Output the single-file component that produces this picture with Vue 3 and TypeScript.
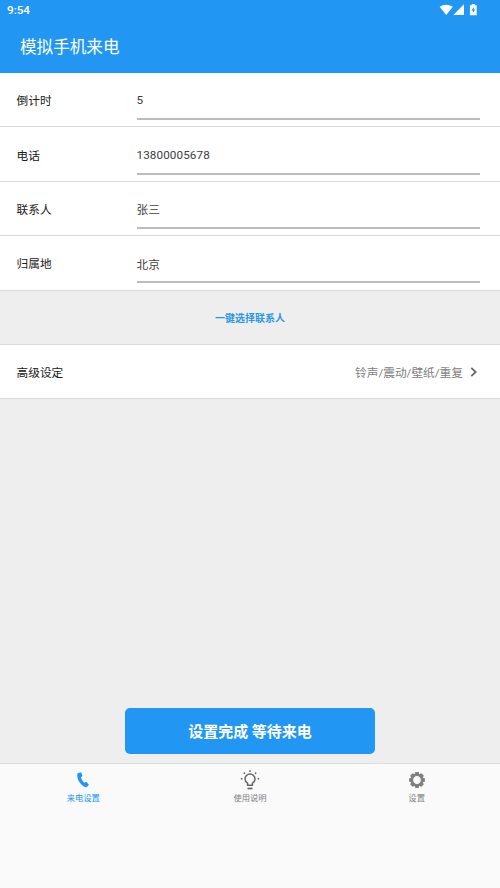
<script setup lang="ts">
import { reactive, ref } from 'vue'

interface Field {
  label: string
  value: string
}

const fields = reactive<Field[]>([
  { label: '倒计时', value: '5' },
  { label: '电话', value: '13800005678' },
  { label: '联系人', value: '张三' },
  { label: '归属地', value: '北京' },
])

const tabs = [
  { id: 'call', label: '来电设置' },
  { id: 'help', label: '使用说明' },
  { id: 'settings', label: '设置' },
]
const active = ref('call')
</script>

<template>
  <div class="screen">
    <header class="header">
      <div class="status">
        <span class="clock">9:54</span>
        <svg class="status-icons" width="39" height="12" viewBox="0 0 39 12">
          <path d="M-.4 2.8Q6.2-1.4 12.8 2.8L6.2 11Z" />
          <path d="M24 .2V11H13.4Z" />
          <path fill-rule="evenodd" d="M31.8 0h3v1.2h1.9V11.2h-6.8V1.2H31.8ZM33.8 3l-2.4 3.5h1.5V9l2.3-3.5H33.8Z" />
        </svg>
      </div>
      <h1 class="title">模拟手机来电</h1>
    </header>

    <main class="content">
      <section>
        <label v-for="field in fields" :key="field.label" class="row field">
          <span class="label">{{ field.label }}</span>
          <input v-model="field.value" class="value" type="text" />
        </label>
      </section>
      <button class="pick" type="button">一键选择联系人</button>
      <div class="row advanced">
        <span class="label">高级设定</span>
        <span class="summary">铃声/震动/壁纸/重复</span>
        <svg class="chevron" width="8" height="10" viewBox="0 0 8 10">
          <path d="M1.3 .8 5.7 5 1.3 9.2" />
        </svg>
      </div>
      <button class="submit" type="button">设置完成 等待来电</button>
    </main>

    <nav class="tabs">
      <button
        v-for="tab in tabs"
        :key="tab.id"
        class="tab"
        :class="{ active: tab.id === active }"
        type="button"
        @click="active = tab.id"
      >
        <svg v-if="tab.id === 'call'" width="20" height="20" viewBox="0 0 20 20">
          <path
            fill="currentColor"
            d="M5.2 3.1 7.3 2.4Q8.1 2.2 8.4 3L9.3 5.6Q9.5 6.2 9 6.6L7.8 7.6Q8.8 10.6 11.2 12.7L12.7 12Q13.3 11.8 13.7 12.2L15.5 14.2Q16 14.8 15.4 15.4L13.9 16.9Q13.2 17.5 12.1 17C7.7 15 4.4 10.3 4.2 5.2Q4.1 3.6 5.2 3.1Z"
          />
        </svg>
        <svg v-else-if="tab.id === 'help'" class="bulb" width="20" height="20" viewBox="0 0 20 20">
          <g fill="none" stroke="currentColor" stroke-width="1.5">
            <path d="M7.6 15.2v-2Q5 11.7 5 9a5 5 0 0 1 10 0q0 2.7-2.6 4.2v2Z" />
            <path d="M7.5 18.5h5" stroke-width="1.7" />
            <path d="M10 .2v1.7M3.8 2.6l1.2 1.2M16.2 2.6l-1.2 1.2M.8 8.7h1.6M17.6 8.7h1.6" />
          </g>
        </svg>
        <svg v-else width="20" height="20" viewBox="0 0 20 20">
          <g fill="currentColor">
            <rect
              v-for="n in 8"
              :key="n"
              x="7.9"
              y="2.1"
              width="4.2"
              height="4"
              rx=".8"
              :transform="`rotate(${n * 45} 10 10)`"
            />
          </g>
          <circle cx="10" cy="10" r="5.2" fill="none" stroke="currentColor" stroke-width="2.6" />
        </svg>
        <span>{{ tab.label }}</span>
      </button>
    </nav>
  </div>
</template>

<style>
body {
  margin: 0;
}
</style>

<style scoped>
.screen {
  display: flex;
  flex-direction: column;
  height: 888px;
  background: #fafafa;
  color: #303030;
  font-family: Roboto, 'Noto Sans CJK SC', sans-serif;
  font-size: 11.7px;
}

button,
input {
  border: 0;
  border-radius: 0;
  padding: 0;
  font: inherit;
  color: inherit;
  background: none;
  outline: none;
}

.header {
  height: 73px;
  flex: none;
  background: #2196f3;
  color: #fff;
}

.status {
  display: flex;
  justify-content: space-between;
  align-items: center;
  height: 20px;
  padding: 0 21px 0 7px;
}

.clock {
  font-size: 11.7px;
  font-weight: 500;
  line-height: 20px;
}

.status-icons {
  fill: #fff;
  overflow: visible;
}

.title {
  margin: 0;
  padding-left: 20px;
  font-size: 16.6px;
  font-weight: 400;
  line-height: 55px;
}

.content {
  display: flex;
  flex-direction: column;
  box-sizing: border-box;
  height: 690px;
  flex: none;
  padding-bottom: 9px;
  background: #eee;
}

.row {
  display: flex;
  align-items: center;
  box-sizing: border-box;
  height: 54.4px;
  padding: 0 20px 0 16.5px;
  border-bottom: 1px solid #d9d9d9;
  background: #fff;
}

.label {
  width: 120px;
  color: #202020;
}

.value {
  box-sizing: border-box;
  flex: 1;
  min-width: 0;
  height: 40px;
  margin-top: 1px;
  padding-top: 2px;
  border-bottom: 2px solid #bcbcbc;
  color: #404040;
  letter-spacing: 0.1px;
}

.pick {
  height: 54.4px;
  border-bottom: 1px solid #d9d9d9;
  color: #2a95e5;
  font-size: 10px;
  font-weight: 700;
}

.summary {
  margin-left: auto;
  color: #808080;
}

.chevron {
  margin: 0 2px 0 7px;
  fill: none;
  stroke: #666;
  stroke-width: 1.8;
}

.submit {
  align-self: center;
  width: 250px;
  height: 46px;
  margin-top: auto;
  padding-bottom: 2px;
  border-radius: 5px;
  background: #2196f3;
  color: #fff;
  font-size: 15px;
  font-weight: 700;
}

.tabs {
  display: grid;
  grid-template-columns: repeat(3, 1fr);
  height: 48px;
  border-top: 1px solid #dcdcdc;
}

.tab {
  display: flex;
  flex-direction: column;
  align-items: center;
  padding-top: 6px;
  color: #808080;
  font-size: 8.3px;
  line-height: 17px;
}

.tab svg {
  flex: none;
}

.bulb {
  color: #666;
}

.tab.active {
  color: #2196f3;
}
</style>
